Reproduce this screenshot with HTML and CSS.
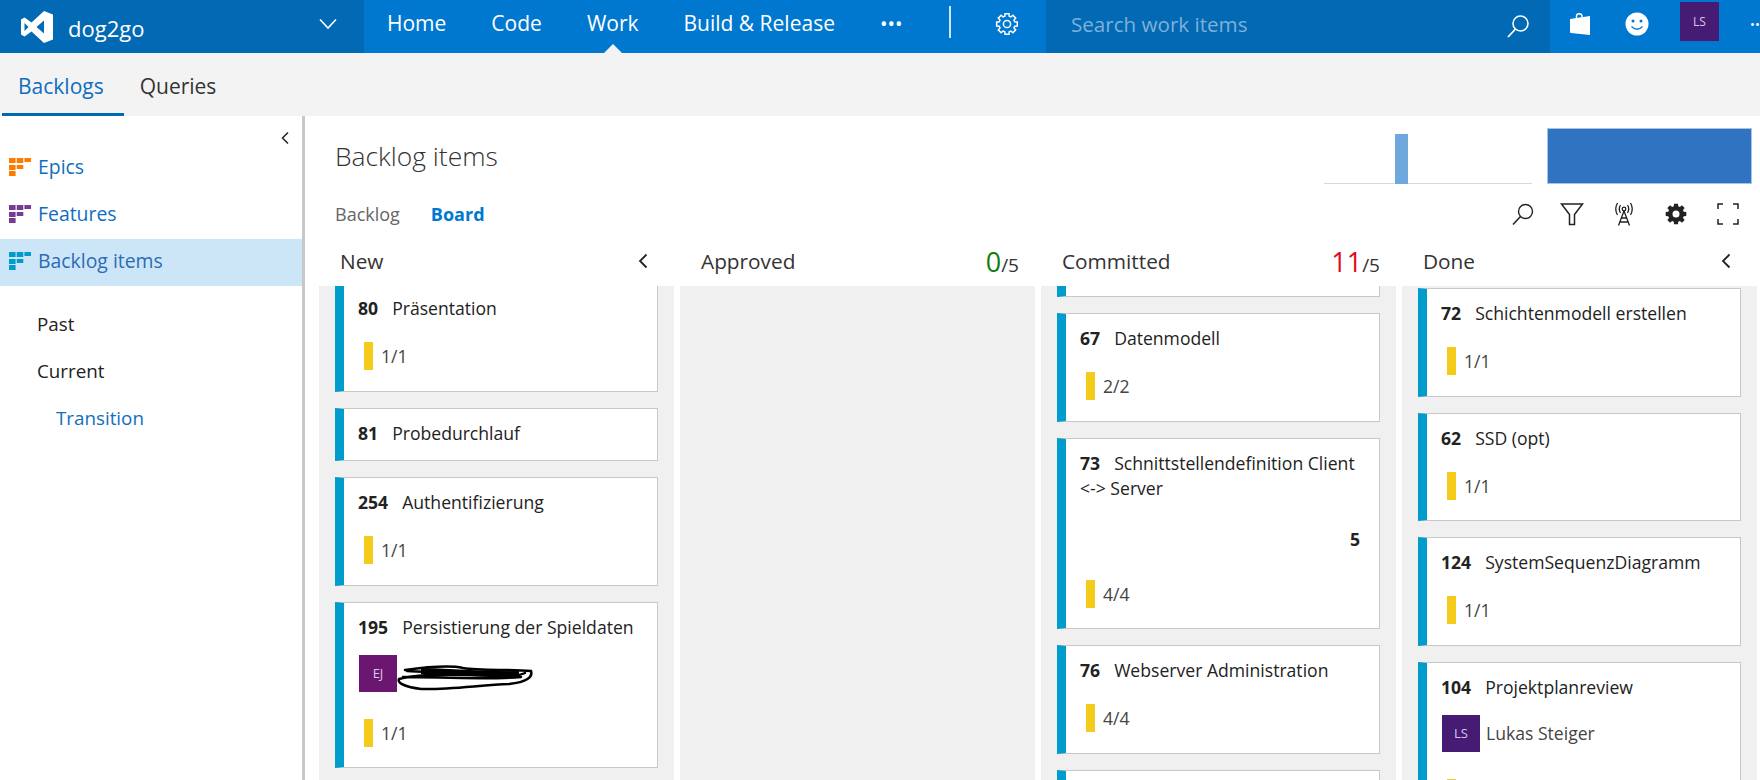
FILE: index.html
```html
<!DOCTYPE html>
<html lang="en">
<head>
    <meta charset="UTF-8">
    <title>Backlog items - dog2go</title>
    <link rel="stylesheet" href="styles.css">
</head>
<body>
    <header class="topbar">
        <div class="project">
            <svg class="vs-logo" width="32" height="32" viewBox="0 0 32 32"><path fill="#fff" fill-rule="evenodd" d="M23 0L32 3.500V28.500L23 32L10.500 20.500L3.500 25.500L0 23.500V8.500L3.500 6.500L10.500 11.500ZM23 9.500L15.500 16L23 22.500ZM3.500 12V20L7.500 16Z"/></svg>
            <span class="project-name">dog2go</span>
            <svg class="project-caret" width="20" height="12" viewBox="0 0 20 12"><path fill="none" stroke="#fff" stroke-width="1.600" d="M2 1.500L10 10L18 1.500"/></svg>
        </div>
        <nav class="nav">
            <a class="nav-item">Home</a>
            <a class="nav-item">Code</a>
            <a class="nav-item nav-active">Work</a>
            <a class="nav-item">Build &amp; Release</a>
            <span class="nav-more">•••</span>
            <span class="nav-sep"></span>
            <svg class="nav-gear" width="24" height="24" viewBox="0 0 24 24"><path fill="none" stroke="#fff" stroke-width="1.500" d="M10 1.700H14L14.200 4.300L15.900 5L17.900 3.300L20.700 6.100L19 8.100L19.700 9.800L22.300 10V14L19.700 14.200L19 15.900L20.700 17.900L17.900 20.700L15.900 19L14.200 19.700L14 22.300H10L9.800 19.700L8.100 19L6.100 20.700L3.300 17.900L5 15.900L4.300 14.200L1.700 14V10L4.300 9.800L5 8.100L3.300 6.100L6.100 3.300L8.100 5L9.800 4.300Z"/><circle cx="12" cy="12" r="3.600" fill="none" stroke="#fff" stroke-width="1.500"/></svg>
        </nav>
        <div class="search">
            <span class="search-text">Search work items</span>
            <svg class="search-icon" width="24" height="24" viewBox="0 0 24 24"><circle cx="14.500" cy="9.500" r="7.500" fill="none" stroke="#fff" stroke-width="1.600"/><path stroke="#fff" stroke-width="1.800" d="M9.500 15L2 23"/></svg>
        </div>
        <div class="user-tools">
            <svg class="tool-bag" width="24" height="24" viewBox="0 0 24 24"><path fill="none" stroke="#fff" stroke-width="1.400" d="M8.500 6V4C8.500 1 14 1 14 4V6"/><path fill="#fff" d="M2 7L22 4V23L3 21Q2 21 2 20Z"/></svg>
            <svg class="tool-smile" width="24" height="24" viewBox="0 0 24 24"><circle cx="12" cy="12" r="11.500" fill="#fff"/><circle cx="8" cy="9" r="1.500" fill="#0078d0"/><circle cx="16" cy="9" r="1.500" fill="#0078d0"/><path fill="none" stroke="#0078d0" stroke-width="1.300" d="M6.500 14.500Q12 20 17.500 14.500"/></svg>
            <span class="avatar avatar-me">LS</span>
            <span class="tool-more">•••</span>
        </div>
    </header>

    <div class="subbar">
        <a class="subtab subtab-active">Backlogs</a>
        <a class="subtab">Queries</a>
    </div>

    <div class="main">
        <aside class="sidebar">
            <div class="collapse-row">
                <svg width="10" height="14" viewBox="0 0 10 14"><path fill="none" stroke="#222" stroke-width="1.500" d="M8 1.500L2.500 7L8 12.500"/></svg>
            </div>
            <a class="side-item">
                <svg class="level-icon" width="22" height="18" viewBox="0 0 22 18" fill="#ff7b00"><path d="M0 0h6.600v5H0zM7.700 0h6.600v5H7.700zM15.400 0h6.600v4h-6.600zM0 7h6.600v5H0zM7.700 7h6.600v4H7.700zM0 13h6.600v5H0z"/></svg>
                Epics
            </a>
            <a class="side-item">
                <svg class="level-icon" width="22" height="18" viewBox="0 0 22 18" fill="#773b93"><path d="M0 0h6.600v5H0zM7.700 0h6.600v5H7.700zM15.400 0h6.600v4h-6.600zM0 7h6.600v5H0zM7.700 7h6.600v4H7.700zM0 13h6.600v5H0z"/></svg>
                Features
            </a>
            <a class="side-item side-active">
                <svg class="level-icon" width="22" height="18" viewBox="0 0 22 18" fill="#009ccc"><path d="M0 0h6.600v5H0zM7.700 0h6.600v5H7.700zM15.400 0h6.600v4h-6.600zM0 7h6.600v5H0zM7.700 7h6.600v4H7.700zM0 13h6.600v5H0z"/></svg>
                Backlog items
            </a>
            <div class="iterations">
                <a class="iter">Past</a>
                <a class="iter">Current</a>
                <a class="iter iter-sub">Transition</a>
            </div>
        </aside>

        <section class="content">
            <div class="title-row">
                <h1 class="page-title">Backlog items</h1>
                <div class="charts">
                    <div class="chart-velocity"><div class="chart-bar"></div></div>
                    <div class="chart-flow"></div>
                </div>
            </div>
            <div class="tabs-row">
                <div class="tabs">
                    <a class="tab">Backlog</a>
                    <a class="tab tab-active">Board</a>
                </div>
                <div class="toolbar">
                    <svg class="tool-find" width="24" height="24" viewBox="0 0 24 24"><circle cx="14.500" cy="9.500" r="7" fill="none" stroke="#222" stroke-width="1.400"/><path stroke="#222" stroke-width="1.500" d="M9.500 14.500L2 22.500"/></svg>
                    <svg width="24" height="24" viewBox="0 0 24 24"><path fill="none" stroke="#222" stroke-width="1.500" d="M1.500 2H22.500L14.500 12.500V22.500H9.500V12.500Z"/></svg>
                    <svg width="24" height="24" viewBox="0 0 24 24" fill="none" stroke="#222" stroke-width="1.300"><circle cx="12" cy="7" r="1.800"/><path d="M8.500 3Q6 7 8.500 11M15.500 3Q18 7 15.500 11M5.500 1Q2 7 5.500 13M18.500 1Q22 7 18.500 13M12 9L6.500 23.500M12 9L17.500 23.500M9.500 16H14.500M8 20H16"/></svg>
                    <svg width="24" height="24" viewBox="0 0 24 24"><path fill="#222" fill-rule="evenodd" d="M10 1.700H14L14.200 4.300L15.900 5L17.900 3.300L20.700 6.100L19 8.100L19.700 9.800L22.300 10V14L19.700 14.200L19 15.900L20.700 17.900L17.900 20.700L15.900 19L14.200 19.700L14 22.300H10L9.800 19.700L8.100 19L6.100 20.700L3.300 17.900L5 15.900L4.300 14.200L1.700 14V10L4.300 9.800L5 8.100L3.300 6.100L6.100 3.300L8.100 5L9.800 4.300ZM12 8.500A3.500 3.500 0 1 0 12 15.500A3.500 3.500 0 1 0 12 8.500Z"/></svg>
                    <svg width="24" height="24" viewBox="0 0 24 24" fill="none" stroke="#222" stroke-width="1.500"><path d="M2 7V2H7M17 2H22V7M22 17V22H17M7 22H2V17"/></svg>
                </div>
            </div>

            <div class="board">
                <div class="col">
                    <div class="col-head">
                        <span class="col-name">New</span>
                        <svg class="col-caret" width="12" height="16" viewBox="0 0 12 16"><path fill="none" stroke="#222" stroke-width="1.800" d="M9.500 1.500L3 8L9.500 14.500"/></svg>
                    </div>
                    <div class="col-body body-new">
                        <div class="card">
                            <div class="card-title"><b>80</b>Präsentation</div>
                            <div class="tasks"><span class="task-bar"></span>1/1</div>
                        </div>
                        <div class="card">
                            <div class="card-title"><b>81</b>Probedurchlauf</div>
                        </div>
                        <div class="card">
                            <div class="card-title"><b>254</b>Authentifizierung</div>
                            <div class="tasks"><span class="task-bar"></span>1/1</div>
                        </div>
                        <div class="card">
                            <div class="card-title"><b>195</b>Persistierung der Spieldaten</div>
                            <div class="assignee">
                                <span class="avatar avatar-ej">EJ</span>
                                <svg class="scribble" width="136" height="27" viewBox="0 0 136 27"><path fill="none" stroke="#000" stroke-width="2.500" stroke-linecap="round" d="M8 5C30 2 52 0 66 3C84 6 112 4 134 6C136 12 130 17 112 19C84 20 50 25 24 24C8 22 0 18 2 14C18 9 60 9 100 11C112 12 124 10 128 8M10 6C36 8 70 7 120 8M6 12C40 12 90 15 124 12"/><path fill="none" stroke="#000" stroke-width="6" d="M24 6C50 6 80 10 122 9"/></svg>
                            </div>
                            <div class="tasks"><span class="task-bar"></span>1/1</div>
                        </div>
                    </div>
                </div>

                <div class="col">
                    <div class="col-head">
                        <span class="col-name">Approved</span>
                        <span class="col-count"><span class="count-ok">0</span>/5</span>
                    </div>
                    <div class="col-body"></div>
                </div>

                <div class="col">
                    <div class="col-head">
                        <span class="col-name">Committed</span>
                        <span class="col-count"><span class="count-over">11</span>/5</span>
                    </div>
                    <div class="col-body">
                        <div class="card card-cut"></div>
                        <div class="card">
                            <div class="card-title"><b>67</b>Datenmodell</div>
                            <div class="tasks"><span class="task-bar"></span>2/2</div>
                        </div>
                        <div class="card">
                            <div class="card-title"><b>73</b>Schnittstellendefinition Client<br>&lt;-&gt; Server</div>
                            <div class="effort">5</div>
                            <div class="tasks"><span class="task-bar"></span>4/4</div>
                        </div>
                        <div class="card">
                            <div class="card-title"><b>76</b>Webserver Administration</div>
                            <div class="tasks"><span class="task-bar"></span>4/4</div>
                        </div>
                        <div class="card card-tail"></div>
                    </div>
                </div>

                <div class="col">
                    <div class="col-head">
                        <span class="col-name">Done</span>
                        <svg class="col-caret" width="12" height="16" viewBox="0 0 12 16"><path fill="none" stroke="#222" stroke-width="1.800" d="M9.500 1.500L3 8L9.500 14.500"/></svg>
                    </div>
                    <div class="col-body body-done">
                        <div class="card">
                            <div class="card-title"><b>72</b>Schichtenmodell erstellen</div>
                            <div class="tasks"><span class="task-bar"></span>1/1</div>
                        </div>
                        <div class="card">
                            <div class="card-title"><b>62</b>SSD (opt)</div>
                            <div class="tasks"><span class="task-bar"></span>1/1</div>
                        </div>
                        <div class="card">
                            <div class="card-title"><b>124</b>SystemSequenzDiagramm</div>
                            <div class="tasks"><span class="task-bar"></span>1/1</div>
                        </div>
                        <div class="card">
                            <div class="card-title"><b>104</b>Projektplanreview</div>
                            <div class="assignee">
                                <span class="avatar avatar-ls">LS</span>
                                <span class="assignee-name">Lukas Steiger</span>
                            </div>
                            <div class="tasks"><span class="task-bar"></span>1/1</div>
                        </div>
                    </div>
                </div>
            </div>
        </section>
    </div>
</body>
</html>
```

FILE: styles.css
```css
body {
    font-family: 'Open Sans', 'Noto Sans', sans-serif;
    margin: 0;
    height: 100vh;
    overflow: hidden;
    display: flex;
    flex-direction: column;
    background-color: #fff;
    color: #222;
}

/* top bar */
.topbar {
    display: flex;
    height: 53px;
    flex-shrink: 0;
    background-color: #0078d0;
    color: #fff;
}
.project {
    width: 364px;
    display: flex;
    align-items: center;
    background-color: #0269b4;
    padding-left: 21px;
    box-sizing: border-box;
}
.project-name {
    font-size: 22px;
    margin: 2px 0 0 15px;
    flex: 1;
}
.project-caret {
    margin-right: 26px;
    margin-top: -6px;
}
.nav {
    width: 682px;
    display: flex;
    align-items: center;
    padding-left: 23px;
    box-sizing: border-box;
}
.nav-item {
    font-size: 21px;
    margin-right: 45px;
    position: relative;
    height: 53px;
    line-height: 47px;
    white-space: nowrap;
}
.nav-active::after {
    content: '';
    position: absolute;
    left: 50%;
    bottom: 0;
    margin-left: -9px;
    border: 9px solid transparent;
    border-top: 0;
    border-bottom-color: #f3f3f3;
}
.nav-more {
    font-size: 20px;
    margin-top: -7px;
}
.nav-sep {
    width: 2px;
    height: 32px;
    background-color: #cfe4f5;
    margin: -10px 44px 0 46px;
}
.nav-gear {
    margin-top: -6px;
}
.search {
    width: 504px;
    display: flex;
    align-items: center;
    justify-content: space-between;
    background-color: #0269b4;
    padding: 0 20px 0 25px;
    box-sizing: border-box;
}
.search-text {
    font-size: 20.6px;
    color: #7fb1d8;
    margin-top: -6px;
}
.search-icon {
    margin-top: -2px;
}
.user-tools {
    flex: 1;
    display: flex;
    align-items: center;
    padding-left: 18px;
    overflow: hidden;
    white-space: nowrap;
}
.tool-smile {
    margin-left: 33px;
}
.tool-bag, .tool-smile {
    margin-top: -6px;
    flex-shrink: 0;
}
.avatar {
    display: flex;
    align-items: center;
    justify-content: center;
    flex-shrink: 0;
    font-size: 12px;
    color: #d8c8e8;
}
.avatar-me {
    width: 39px;
    height: 39px;
    margin: -10px 0 0 31px;
    background-color: #461b74;
}
.tool-more {
    font-size: 13px;
    margin: -6px 0 0 31px;
}

/* sub tabs */
.subbar {
    height: 63px;
    flex-shrink: 0;
    display: flex;
    background-color: #f3f3f3;
    padding-left: 2px;
    box-sizing: border-box;
}
.subtab {
    font-size: 21px;
    padding: 3px 16px 0;
    line-height: 60px;
    height: 57px;
    color: #333;
}
.subtab-active {
    color: #106ebe;
    padding-right: 20px;
    border-bottom: 3px solid #0069b4;
}

/* left side */
.main {
    flex: 1;
    min-height: 0;
    display: flex;
}
.sidebar {
    width: 305px;
    flex-shrink: 0;
    box-sizing: border-box;
    border-right: 3px solid #c8c8c8;
}
.collapse-row {
    height: 29px;
    display: flex;
    justify-content: flex-end;
    align-items: flex-end;
    padding-right: 12px;
}
.side-item {
    height: 47px;
    box-sizing: border-box;
    padding: 0 0 5px 9px;
    display: flex;
    align-items: center;
    font-size: 19.4px;
    color: #106ebe;
}
.level-icon {
    margin-right: 7px;
    margin-top: 2px;
}
.side-active {
    background-color: #cde6f7;
    color: #2b6cb5;
}
.iterations {
    padding-top: 15px;
}
.iter {
    display: block;
    height: 47px;
    line-height: 47px;
    font-size: 18.8px;
    padding-left: 37px;
    color: #222;
}
.iter-sub {
    padding-left: 56px;
    color: #106ebe;
}

/* page heading */
.content {
    flex: 1;
    min-width: 0;
    display: flex;
    flex-direction: column;
}
.title-row {
    height: 68px;
    flex-shrink: 0;
    display: flex;
    justify-content: space-between;
    padding: 0 8px 0 30px;
}
.page-title {
    font-size: 26.4px;
    font-weight: 300;
    color: #333;
    margin: 22px 0 0;
}
.charts {
    display: flex;
    align-items: flex-end;
    height: 56px;
    margin-top: 12px;
    gap: 15px;
}
.chart-velocity {
    width: 208px;
    height: 50px;
    box-sizing: border-box;
    border-bottom: 1px solid #d8d8d8;
    padding-left: 71px;
}
.chart-bar {
    width: 13px;
    height: 50px;
    background-color: #6ea8dc;
}
.chart-flow {
    width: 205px;
    height: 56px;
    background-color: #3073c0;
    border: 1px solid #a8c4e4;
    box-sizing: border-box;
}
.tabs-row {
    height: 54px;
    flex-shrink: 0;
    box-sizing: border-box;
    padding: 6px 20px 0 30px;
    display: flex;
    justify-content: space-between;
    align-items: center;
}
.tabs {
    display: flex;
    gap: 31px;
    font-size: 18px;
}
.tab {
    color: #666;
}
.tab-active {
    color: #0078d0;
    font-weight: 700;
}
.toolbar {
    display: flex;
    gap: 28px;
}
.tool-find {
    margin-right: -3px;
}

/* board */
.board {
    flex: 1;
    min-height: 0;
    display: flex;
    gap: 6px;
    padding-left: 14px;
}
.col {
    width: 355px;
    display: flex;
    flex-direction: column;
}
.col-head {
    height: 48px;
    flex-shrink: 0;
    box-sizing: border-box;
    padding: 0 16px 2px 21px;
    display: flex;
    justify-content: space-between;
    align-items: center;
}
.col-name {
    font-size: 20.8px;
    color: #333;
}
.col-caret {
    margin-right: 9px;
}
.col-count {
    font-size: 19px;
    color: #333;
}
.count-ok, .count-over {
    font-size: 27px;
}
.count-ok {
    color: #107c10;
}
.count-over {
    color: #e00b1c;
}
.col-body {
    flex: 1;
    min-height: 0;
    overflow: hidden;
    background-color: #f0f0f0;
    padding: 0 16px;
}
.body-new .card:first-child {
    margin-top: -3px;
}
.body-done {
    padding-top: 2px;
}

/* cards */
.card {
    box-sizing: border-box;
    width: 323px;
    background-color: #fff;
    border: 1px solid #c8c8c8;
    border-left: 9px solid #009ccc;
    padding: 12px 8px 14.5px 14px;
    margin-bottom: 16px;
    font-size: 17.6px;
}
.card-cut {
    height: 11px;
    border-top: 0;
    padding: 0;
}
.card-tail {
    height: 60px;
}
.card-title {
    line-height: 25px;
    color: #222;
    white-space: nowrap;
}
.card-title b {
    font-weight: 700;
    margin-right: 14px;
}
.tasks {
    display: flex;
    align-items: center;
    margin: 21px 0 6px 6px;
    height: 28px;
    color: #444;
}
.task-bar {
    width: 9px;
    height: 28px;
    background-color: #f5cb1b;
    margin-right: 8px;
}
.assignee {
    display: flex;
    align-items: center;
    margin: 15px 0 27px 1px;
    height: 37px;
    color: #444;
}
.assignee .avatar {
    width: 38px;
    height: 37px;
    font-size: 13px;
}
.avatar-ej {
    background-color: #6b1670;
}
.avatar-ls {
    background-color: #461b74;
}
.assignee-name {
    margin-left: 6px;
}
.scribble {
    margin-top: 11px;
}
.effort {
    text-align: right;
    font-weight: 700;
    line-height: 25px;
    margin: 26px 11px 28px 0;
}
```
